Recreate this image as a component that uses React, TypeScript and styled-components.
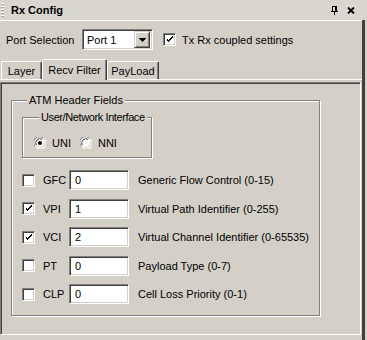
import { createGlobalStyle, styled } from "styled-components"

const GlobalStyle = createGlobalStyle`
  html, body {
    margin: 0;
    padding: 0;
    background: #d4d0c8;
  }
  body {
    font-family: "Liberation Sans", Arial, sans-serif;
    font-size: 11px;
    color: #000;
  }
`

const rows = [
  { key: "GFC", value: "0", checked: false, desc: "Generic Flow Control (0-15)" },
  { key: "VPI", value: "1", checked: true, desc: "Virtual Path Identifier (0-255)" },
  { key: "VCI", value: "2", checked: true, desc: "Virtual Channel Identifier (0-65535)" },
  { key: "PT", value: "0", checked: false, desc: "Payload Type (0-7)" },
  { key: "CLP", value: "0", checked: false, desc: "Cell Loss Priority (0-1)" },
]

const tabs = [
  { label: "Layer", width: 41 },
  { label: "Recv Filter", width: 65, active: true },
  { label: "PayLoad", width: 52 },
]

function Check({ checked }: { checked: boolean }) {
  return (
    <CheckBox>
      {checked && (
        <svg width="7" height="7" viewBox="0 0 7 7" shapeRendering="crispEdges">
          <path d="M0 2h1v3h1v1h1v-1h1v-1h1v-1h1v-1h1v-2h-1v1h-1v1h-1v1h-1v1h-1v-1h-1v-1h-1z" fill="#000" />
        </svg>
      )}
    </CheckBox>
  )
}

function Radio({ checked }: { checked: boolean }) {
  return (
    <svg width="12" height="12" viewBox="0 0 12 12">
      <circle cx="6" cy="6" r="5.5" fill="#fff" />
      <path d="M1.2 9.2 A5.3 5.3 0 0 1 9.2 1.2" stroke="#808080" strokeWidth="1" fill="none" />
      <path d="M2.4 8.2 A4.2 4.2 0 0 1 8.2 2.4" stroke="#404040" strokeWidth="1" fill="none" />
      <path d="M10.8 2.8 A5.3 5.3 0 0 1 2.8 10.8" stroke="#fff" strokeWidth="1" fill="none" />
      <path d="M9.6 3.8 A4.2 4.2 0 0 1 3.8 9.6" stroke="#d4d0c8" strokeWidth="1" fill="none" />
      {checked && <circle cx="6" cy="6" r="2" fill="#000" />}
    </svg>
  )
}

export default function App() {
  return (
    <>
      <GlobalStyle />
      <Window>
        <TitleBar>
          <Grip />
          <Title>Rx Config</Title>
          <TitleIcons>
            <svg width="7" height="9" viewBox="0 0 7 9" shapeRendering="crispEdges">
              <rect x="1" y="0" width="1" height="6" fill="#000" />
              <rect x="1" y="0" width="4" height="1" fill="#000" />
              <rect x="4" y="0" width="2" height="6" fill="#000" />
              <rect x="0" y="5" width="7" height="1" fill="#000" />
              <rect x="3" y="6" width="1" height="3" fill="#000" />
            </svg>
            <svg width="8" height="7" viewBox="0 0 8 7">
              <path d="M1 0.5 L7 6.5 M7 0.5 L1 6.5" stroke="#000" strokeWidth="1.8" />
            </svg>
          </TitleIcons>
        </TitleBar>
        <Body>
          <Main>
            <PortRow>
              <PortLabel>Port Selection</PortLabel>
              <Select>
                <SelectText>Port 1</SelectText>
                <SelectButton>
                  <svg width="7" height="4" viewBox="0 0 7 4" shapeRendering="crispEdges">
                    <path d="M0 0h7v1h-1v1h-1v1h-1v1h-1v-1h-1v-1h-1v-1h-1z" fill="#000" />
                  </svg>
                </SelectButton>
              </Select>
              <CoupledCheck>
                <Check checked />
              </CoupledCheck>
              <span>Tx Rx coupled settings</span>
            </PortRow>
            <TabStrip>
              {tabs.map((t) => (
                <Tab key={t.label} $active={!!t.active} $width={t.width}>
                  {t.label}
                </Tab>
              ))}
            </TabStrip>
            <Panel>
              <Group>
                <Legend>ATM Header Fields</Legend>
                <InnerGroup>
                  <Legend $tight>User/Network Interface</Legend>
                  <RadioRow>
                    <RadioOption>
                      <Radio checked />
                      <span>UNI</span>
                    </RadioOption>
                    <RadioOption>
                      <Radio checked={false} />
                      <span>NNI</span>
                    </RadioOption>
                  </RadioRow>
                </InnerGroup>
                <FieldList>
                  {rows.map((r) => (
                    <FieldRow key={r.key}>
                      <Check checked={r.checked} />
                      <FieldKey>{r.key}</FieldKey>
                      <FieldInput readOnly defaultValue={r.value} />
                      <FieldDesc>{r.desc}</FieldDesc>
                    </FieldRow>
                  ))}
                </FieldList>
              </Group>
            </Panel>
          </Main>
          <RightEdge />
        </Body>
      </Window>
    </>
  )
}

const Window = styled.div`
  width: 367px;
  height: 340px;
  display: flex;
  flex-direction: column;
  overflow: hidden;
`

const TitleBar = styled.div`
  height: 20px;
  display: flex;
  align-items: center;
  background: #d9d6cf;
  padding-left: 1px;
  box-sizing: border-box;
`

const Grip = styled.div`
  width: 3px;
  height: 15px;
  background: repeating-linear-gradient(to bottom, #fff 0 1px, #aaa69e 1px 2px, transparent 2px 3px);
`

const Title = styled.div`
  margin-left: 7px;
  font-weight: bold;
  flex: 1;
`

const TitleIcons = styled.div`
  display: flex;
  align-items: center;
  gap: 9px;
  margin-right: 12px;
`

const Body = styled.div`
  flex: 1;
  display: flex;
`

const Main = styled.div`
  width: 362px;
  border-top: 1px solid #fff;
  display: flex;
  flex-direction: column;
`

const RightEdge = styled.div`
  width: 3px;
  background: #404040;
  margin-right: 2px;
`

const PortRow = styled.div`
  margin-top: 8px;
  height: 21px;
  display: flex;
  align-items: center;
  padding-left: 6px;
`

const PortLabel = styled.span`
  width: 76px;
`

const Select = styled.div`
  width: 71px;
  height: 21px;
  box-sizing: border-box;
  background: #fff;
  border-top: 1px solid #808080;
  border-left: 1px solid #808080;
  border-right: 1px solid #fff;
  border-bottom: 1px solid #fff;
  box-shadow: inset 1px 1px 0 #404040, inset -1px -1px 0 #d4d0c8;
  display: flex;
  align-items: center;
  padding: 2px;
`

const SelectText = styled.span`
  flex: 1;
  padding-left: 2px;
`

const SelectButton = styled.div`
  width: 16px;
  height: 17px;
  box-sizing: border-box;
  background: #d4d0c8;
  border-top: 1px solid #d4d0c8;
  border-left: 1px solid #d4d0c8;
  border-right: 1px solid #404040;
  border-bottom: 1px solid #404040;
  box-shadow: inset 1px 1px 0 #fff, inset -1px -1px 0 #808080;
  display: flex;
  align-items: center;
  justify-content: center;
`

const CoupledCheck = styled.div`
  margin-left: 10px;
  margin-right: 6px;
  display: flex;
`

const CheckBox = styled.span`
  width: 13px;
  height: 13px;
  box-sizing: border-box;
  flex: none;
  background: #fff;
  border-top: 1px solid #808080;
  border-left: 1px solid #808080;
  border-right: 1px solid #fff;
  border-bottom: 1px solid #fff;
  box-shadow: inset 1px 1px 0 #404040, inset -1px -1px 0 #d4d0c8;
  display: flex;
  align-items: center;
  justify-content: center;
`

const TabStrip = styled.div`
  margin-top: 9px;
  height: 21px;
  box-sizing: border-box;
  border-bottom: 1px solid #fff;
  display: flex;
  align-items: flex-end;
  padding-left: 1px;
`

const Tab = styled.div<{ $active: boolean; $width: number }>`
  width: ${(p) => p.$width}px;
  height: ${(p) => (p.$active ? 21 : 18)}px;
  margin-bottom: ${(p) => (p.$active ? -1 : 0)}px;
  padding-top: ${(p) => (p.$active ? 0 : 1)}px;
  box-sizing: border-box;
  position: relative;
  z-index: ${(p) => (p.$active ? 1 : 0)};
  background: #d4d0c8;
  border-top: 1px solid #fff;
  border-left: 1px solid #fff;
  border-right: 1px solid #404040;
  border-radius: 2px 2px 0 0;
  box-shadow: inset -1px 0 0 #808080;
  display: flex;
  align-items: center;
  justify-content: center;
  white-space: nowrap;
`

const Panel = styled.div`
  margin-top: 2px;
  margin-right: 1px;
  height: 253px;
  box-sizing: border-box;
  border-top: 1px solid #808080;
  border-left: 1px solid #808080;
  border-right: 1px solid #fff;
  border-bottom: 1px solid #fff;
  box-shadow: inset 1px 1px 0 #404040;
  padding: 11px 0 0 10px;
`

const Group = styled.fieldset`
  margin: 0;
  width: 303px;
  box-sizing: border-box;
  border: 1px solid #808080;
  box-shadow: inset 1px 1px 0 #fff, 1px 1px 0 #fff;
  padding: 4px 10px 11px 10px;
`

const Legend = styled.legend<{ $tight?: boolean }>`
  margin-left: 5px;
  padding: 0 2px;
  line-height: 13px;
  white-space: nowrap;
  letter-spacing: ${(p) => (p.$tight ? "-0.4px" : "0")};
  background: #d4d0c8;
`

const InnerGroup = styled.fieldset`
  margin: 0;
  width: 130px;
  box-sizing: border-box;
  border: 1px solid #808080;
  box-shadow: inset 1px 1px 0 #fff, 1px 1px 0 #fff;
  padding: 12px 0 7px 11px;
`

const RadioRow = styled.div`
  height: 14px;
  display: flex;
  align-items: center;
  gap: 9px;
`

const RadioOption = styled.div`
  display: flex;
  align-items: center;
  gap: 6px;
`

const FieldList = styled.div`
  margin-top: 12px;
  display: flex;
  flex-direction: column;
  gap: 8.5px;
`

const FieldRow = styled.div`
  height: 20px;
  display: flex;
  align-items: center;
`

const FieldKey = styled.span`
  margin-left: 8px;
  width: 26px;
`

const FieldInput = styled.input`
  width: 60px;
  height: 20px;
  margin: 0 9px 0 0;
  box-sizing: border-box;
  font: inherit;
  color: #000;
  background: #fff;
  outline: none;
  border-top: 1px solid #808080;
  border-left: 1px solid #808080;
  border-right: 1px solid #fff;
  border-bottom: 1px solid #fff;
  box-shadow: inset 1px 1px 0 #404040, inset -1px -1px 0 #d4d0c8;
  padding: 0 0 0 5px;
`

const FieldDesc = styled.span`
  white-space: nowrap;
`
